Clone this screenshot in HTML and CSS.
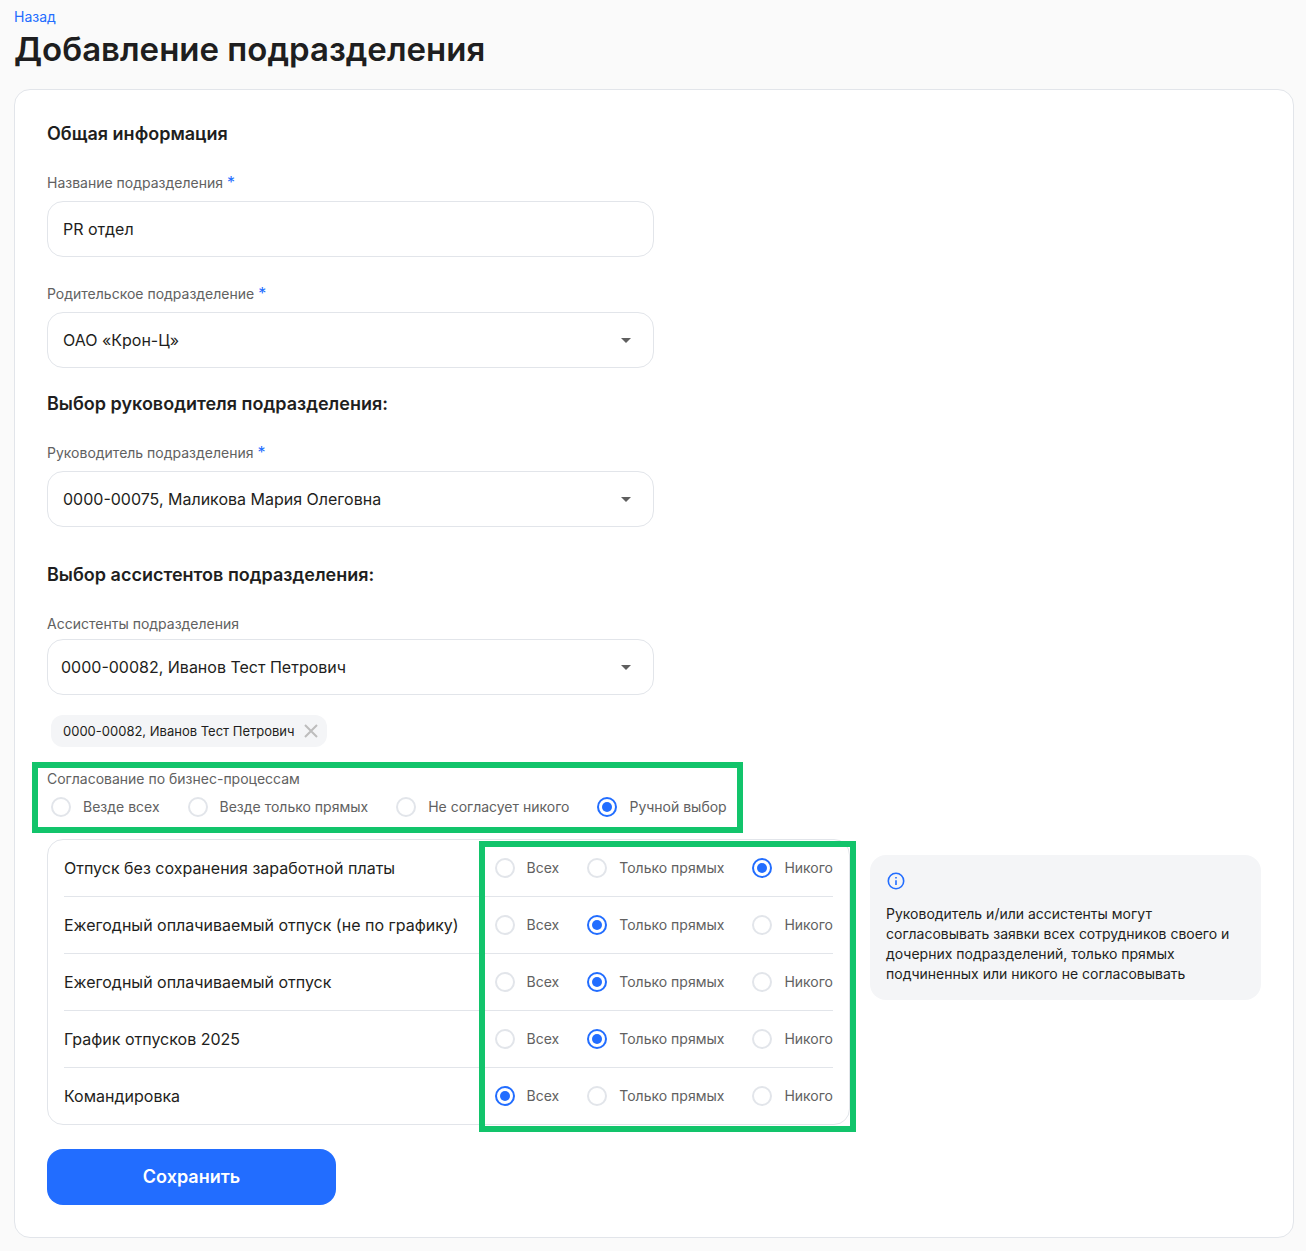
FILE: index.html
```html
<!DOCTYPE html>
<html lang="ru">
<head>
<meta charset="utf-8">
<meta name="viewport" content="width=device-width, initial-scale=1">
<title>Добавление подразделения</title>
<link rel="stylesheet" href="styles.css">
</head>
<body>
<main class="page">
  <a class="back" href="#">Назад</a>
  <h1 class="title">Добавление подразделения</h1>

  <form class="card">
    <h2 class="section">Общая информация</h2>
    <div class="field">
      <label class="label" for="name">Название подразделения <span class="required">*</span></label>
      <input class="control" id="name" type="text" value="PR отдел">
    </div>
    <div class="field">
      <label class="label" for="parent">Родительское подразделение <span class="required">*</span></label>
      <div class="select">
        <select class="control" id="parent"><option>ОАО «Крон-Ц»</option></select>
        <svg class="arrow" viewBox="0 0 10 5" aria-hidden="true"><path d="M0 0h10L5 5z"/></svg>
      </div>
    </div>

    <h2 class="section">Выбор руководителя подразделения:</h2>
    <div class="field">
      <label class="label" for="head">Руководитель подразделения <span class="required">*</span></label>
      <div class="select">
        <select class="control" id="head"><option>0000-00075, Маликова Мария Олеговна</option></select>
        <svg class="arrow" viewBox="0 0 10 5" aria-hidden="true"><path d="M0 0h10L5 5z"/></svg>
      </div>
    </div>

    <h2 class="section section-spaced">Выбор ассистентов подразделения:</h2>
    <div class="field field-multi">
      <label class="label" for="assistants">Ассистенты подразделения</label>
      <div class="select">
        <select class="control" id="assistants"><option>0000-00082, Иванов Тест Петрович</option></select>
        <svg class="arrow" viewBox="0 0 10 5" aria-hidden="true"><path d="M0 0h10L5 5z"/></svg>
      </div>
    </div>
    <div class="chip">
      <span>0000-00082, Иванов Тест Петрович</span>
      <button class="chip-remove" type="button" aria-label="Удалить">
        <svg viewBox="0 0 14 14" aria-hidden="true"><path d="M1 1l12 12M13 1L1 13"/></svg>
      </button>
    </div>

    <div class="approval highlight" role="radiogroup" aria-labelledby="approval">
      <div class="label" id="approval">Согласование по бизнес-процессам</div>
      <div class="options">
        <label class="option"><input type="radio" name="all">Везде всех</label>
        <label class="option"><input type="radio" name="all">Везде только прямых</label>
        <label class="option"><input type="radio" name="all">Не согласует никого</label>
        <label class="option"><input type="radio" name="all" checked>Ручной выбор</label>
      </div>
    </div>

    <div class="columns">
      <div class="processes highlight">
        <div class="process" role="radiogroup" aria-labelledby="p1">
          <span id="p1">Отпуск без сохранения заработной платы</span>
          <div class="options">
            <label class="option"><input type="radio" name="p1">Всех</label>
            <label class="option"><input type="radio" name="p1">Только прямых</label>
            <label class="option"><input type="radio" name="p1" checked>Никого</label>
          </div>
        </div>
        <div class="process" role="radiogroup" aria-labelledby="p2">
          <span id="p2">Ежегодный оплачиваемый отпуск (не по графику)</span>
          <div class="options">
            <label class="option"><input type="radio" name="p2">Всех</label>
            <label class="option"><input type="radio" name="p2" checked>Только прямых</label>
            <label class="option"><input type="radio" name="p2">Никого</label>
          </div>
        </div>
        <div class="process" role="radiogroup" aria-labelledby="p3">
          <span id="p3">Ежегодный оплачиваемый отпуск</span>
          <div class="options">
            <label class="option"><input type="radio" name="p3">Всех</label>
            <label class="option"><input type="radio" name="p3" checked>Только прямых</label>
            <label class="option"><input type="radio" name="p3">Никого</label>
          </div>
        </div>
        <div class="process" role="radiogroup" aria-labelledby="p4">
          <span id="p4">График отпусков 2025</span>
          <div class="options">
            <label class="option"><input type="radio" name="p4">Всех</label>
            <label class="option"><input type="radio" name="p4" checked>Только прямых</label>
            <label class="option"><input type="radio" name="p4">Никого</label>
          </div>
        </div>
        <div class="process" role="radiogroup" aria-labelledby="p5">
          <span id="p5">Командировка</span>
          <div class="options">
            <label class="option"><input type="radio" name="p5" checked>Всех</label>
            <label class="option"><input type="radio" name="p5">Только прямых</label>
            <label class="option"><input type="radio" name="p5">Никого</label>
          </div>
        </div>
      </div>

      <aside class="hint">
        <svg class="hint-icon" viewBox="0 0 20 20" aria-hidden="true">
          <circle cx="10" cy="10" r="7.7"/>
          <path d="M10 9.2v4.8M10 6v1.6"/>
        </svg>
        <p class="hint-text">Руководитель и/или ассистенты могут согласовывать заявки всех сотрудников своего и дочерних подразделений, только прямых подчиненных или никого не согласовывать</p>
      </aside>
    </div>

    <button class="save" type="submit">Сохранить</button>
  </form>
</main>
</body>
</html>
```
FILE: styles.css
```css
*,
*::before,
*::after {
  box-sizing: border-box;
}

body {
  margin: 0;
  background: #fafafa;
  color: #1e1e20;
  font: 16px/24px Inter, "Liberation Sans", sans-serif;
}

.page {
  padding: 7px 12px 13px 14px;
}

.back {
  display: block;
  width: fit-content;
  color: #226dff;
  font-size: 14px;
  line-height: 20px;
  text-decoration: none;
}

.title {
  margin: 0 0 18px;
  font-size: 33px;
  font-weight: 600;
  line-height: 44px;
}

.card {
  padding: 32px;
  border: 1px solid #e2e5ea;
  border-radius: 16px;
  background: #fff;
}

.section {
  margin: 24px 0 27px;
  font-size: 18px;
  font-weight: 600;
  line-height: 24px;
}

.section:first-child {
  margin-top: 0;
}

.section-spaced {
  margin-top: 36px;
}

.field {
  display: flex;
  flex-direction: column;
  gap: 8px;
  width: 50%;
}

.field + .field {
  margin-top: 27px;
}

.field-multi {
  gap: 5px;
}

.label {
  color: #616161;
  font-size: 14px;
  line-height: 20px;
}

.required {
  color: #226dff;
  font-size: 16px;
  line-height: 16px;
}

.control {
  width: 100%;
  height: 56px;
  padding: 0 15px;
  border: 1px solid #e2e5ea;
  border-radius: 16px;
  background: #fff;
  color: inherit;
  font: inherit;
  appearance: none;
}

.field-multi .control {
  padding-left: 13px;
}

.select {
  display: grid;
  align-items: center;
}

.select > * {
  grid-area: 1 / 1;
}

.arrow {
  justify-self: end;
  width: 10px;
  height: 5px;
  margin-right: 23px;
  fill: #5f5f5f;
  pointer-events: none;
}

.chip {
  display: flex;
  align-items: center;
  gap: 9px;
  width: fit-content;
  height: 32px;
  margin: 20px 0 0 4px;
  padding: 0 9px 0 12px;
  border-radius: 12px;
  background: #f4f5f7;
  font-size: 13px;
}

.chip-remove {
  display: flex;
  padding: 0;
  border: 0;
  background: none;
}

.chip-remove svg {
  width: 14px;
  height: 14px;
  fill: none;
  stroke: #bdbdbd;
  stroke-width: 2;
}

.highlight {
  position: relative;
}

.highlight::after {
  content: "";
  position: absolute;
  border: 6px solid #12c46b;
  pointer-events: none;
}

.approval {
  width: fit-content;
  margin: 22px 0;
}

.approval::after {
  inset: -7px -16px -16px -15px;
}

.approval .options {
  margin: 8px 0 0 4px;
}

.options {
  display: flex;
  gap: 28px;
}

.option {
  display: flex;
  align-items: center;
  gap: 12px;
  color: #616161;
  font-size: 14px;
  line-height: 20px;
}

.option input {
  display: grid;
  place-items: center;
  width: 20px;
  height: 20px;
  margin: 0;
  border: 2px solid #e2e5ea;
  border-radius: 50%;
  background: #fff;
  appearance: none;
}

.option input:checked {
  border-color: #226dff;
}

.option input:checked::before {
  content: "";
  width: 10px;
  height: 10px;
  border-radius: 50%;
  background: #226dff;
}

.columns {
  display: flex;
  align-items: flex-start;
  gap: 20px;
}

.processes {
  flex: 1;
  padding: 0 16px;
  border: 1px solid #e2e5ea;
  border-radius: 16px;
}

.processes::after {
  inset: 1px -7px -8px auto;
  width: 377px;
}

.process {
  display: flex;
  align-items: center;
  justify-content: space-between;
  height: 57px;
  border-bottom: 1px solid #e2e5ea;
}

.process:last-child {
  height: 56px;
  border-bottom: 0;
}

.hint {
  width: 391px;
  margin-top: 16px;
  padding: 16px;
  border-radius: 16px;
  background: #f4f5f7;
}

.hint-icon {
  display: block;
  width: 20px;
  height: 20px;
  fill: none;
  stroke: #226dff;
  stroke-width: 1.6;
}

.hint-text {
  margin: 13px 0 0;
  font-size: 14px;
  line-height: 20px;
}

.save {
  display: block;
  width: 289px;
  height: 56px;
  margin-top: 24px;
  border: 0;
  border-radius: 16px;
  background: #226dff;
  color: #fff;
  font: inherit;
  font-size: 18px;
  font-weight: 600;
}
```
